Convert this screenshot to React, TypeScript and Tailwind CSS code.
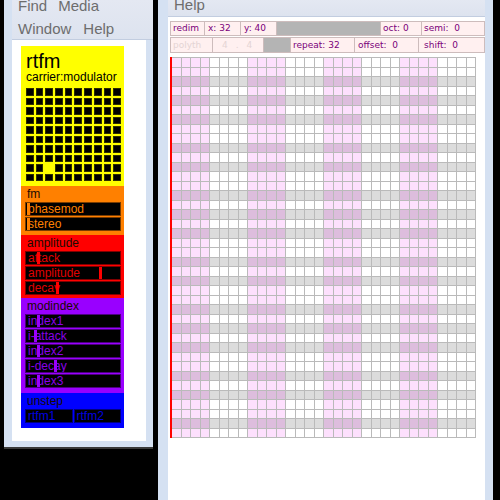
import React from "react";

type Slider = { label: string; pos: number };

type Section = {
  title: string;
  bg: string;
  box: string;
  bar: string;
  pb: string;
  split?: boolean;
  sliders: Slider[];
};

const sections: Section[] = [
  {
    title: "fm",
    bg: "bg-[#ff8000]",
    box: "border-[#7a3c00] text-[#ff8000]",
    bar: "bg-[#ff8000]",
    pb: "pb-[4px]",
    sliders: [
      { label: "phasemod", pos: 1 },
      { label: "stereo", pos: 1 },
    ],
  },
  {
    title: "amplitude",
    bg: "bg-[#ff0000]",
    box: "border-[#800000] text-[#e00000]",
    bar: "bg-[#ff0000]",
    pb: "pb-[3px]",
    sliders: [
      { label: "attack", pos: 11 },
      { label: "amplitude", pos: 73 },
      { label: "decay", pos: 30 },
    ],
  },
  {
    title: "modindex",
    bg: "bg-[#9900ff]",
    box: "border-[#4c0080] text-[#8800e8]",
    bar: "bg-[#9900ff]",
    pb: "pb-[5px]",
    sliders: [
      { label: "index1", pos: 11 },
      { label: "i-attack", pos: 8 },
      { label: "index2", pos: 11 },
      { label: "i-decay", pos: 28 },
      { label: "index3", pos: 11 },
    ],
  },
  {
    title: "unstep",
    bg: "bg-[#0000ff]",
    box: "border-[#000080] text-[#0000e0]",
    bar: "bg-[#0000ff]",
    pb: "pb-[5px]",
    split: true,
    sliders: [
      { label: "rtfm1", pos: -10 },
      { label: "rtfm2", pos: -10 },
    ],
  },
];

const BLACK_KEYS = [1, 3, 6, 8, 10];

function SliderBox({ s, box, bar, className }: { s: Slider; box: string; bar: string; className?: string }) {
  return (
    <div className={`relative h-[14px] overflow-hidden border bg-black ${box} ${className ?? ""}`}>
      <span className="block whitespace-nowrap pl-[2px] text-[12px] leading-[12px]">{s.label}</span>
      {s.pos >= 0 ? (
        <span className={`absolute top-0 h-full w-[3px] ${bar}`} style={{ left: s.pos }} />
      ) : null}
    </div>
  );
}

function Matrix() {
  const cells = [];
  for (let r = 0; r < 10; r++) {
    for (let c = 0; c < 10; c++) {
      const on = r === 8 && c === 2;
      cells.push(
        <div
          key={`${r}-${c}`}
          className={on ? "h-[7.5px] bg-[#ffff00]" : "h-[7.5px] border border-[#2e2e00] bg-black"}
        />
      );
    }
  }
  return <div className="mt-[5px] grid w-[95px] grid-cols-10 gap-[2px]">{cells}</div>;
}

function LeftPanel() {
  return (
    <div className="w-[103px] font-['Liberation_Sans',Arial,sans-serif]">
      <div className="bg-[#ffff00] pb-[5px] pl-[5px] pt-[5px]">
        <div className="text-[20px] leading-[20px] text-black">rtfm</div>
        <div className="text-[12px] leading-[12px] text-black">carrier:modulator</div>
        <Matrix />
      </div>
      {sections.map((sec) => (
        <div key={sec.title} className={`${sec.bg} ${sec.pb} pl-[4px] pr-[3px]`}>
          <div className="h-[16px] pl-[2px] text-[12px] leading-[16px] text-[#1a0a00]">{sec.title}</div>
          {sec.split ? (
            <div className="flex gap-[1px]">
              {sec.sliders.map((s) => (
                <SliderBox key={s.label} s={s} box={sec.box} bar={sec.bar} className="flex-1" />
              ))}
            </div>
          ) : (
            <div className="flex flex-col gap-[1px]">
              {sec.sliders.map((s) => (
                <SliderBox key={s.label} s={s} box={sec.box} bar={sec.bar} />
              ))}
            </div>
          )}
        </div>
      ))}
    </div>
  );
}

function Cell({ w, children, className }: { w: string; children?: React.ReactNode; className?: string }) {
  return (
    <div className={`${w} shrink-0 whitespace-nowrap border-l border-[#cdbcbc] ${className ?? ""}`}>{children}</div>
  );
}

function TopBar() {
  return (
    <div className="flex flex-col gap-[1px] font-['DejaVu_Sans',Verdana,sans-serif] text-[9px] text-[#7a007a]">
      <div className="flex h-[15px] border-y border-r border-[#cdbcbc] bg-[#fff0f0] leading-[13px]">
        <Cell w="w-[34px]" className="pl-[2px]">redim</Cell>
        <Cell w="w-[36px]" className="pl-[3px]">x: 32</Cell>
        <Cell w="w-[36px]" className="pl-[3px]">y: 40</Cell>
        <Cell w="w-[104px]" className="bg-[#b4b4b4]" />
        <Cell w="w-[41px]" className="pl-[2px]">oct: 0</Cell>
        <Cell w="w-[55px]" className="pl-[2px]">semi:&nbsp; 0</Cell>
      </div>
      <div className="flex h-[16px] border-y border-r border-[#cdbcbc] bg-[#fff0f0] leading-[14px]">
        <Cell w="w-[42px]" className="pl-[2px] text-[#e4d4d4]">polyth</Cell>
        <Cell w="w-[51px]" className="flex gap-[8px] pl-[9px] text-[#e4d4d4]">
          <span>4</span>
          <span>.</span>
          <span>4</span>
        </Cell>
        <Cell w="w-[27px]" className="bg-[#b4b4b4]" />
        <Cell w="w-[64px]" className="pl-[2px]">repeat: 32</Cell>
        <Cell w="w-[64px]" className="pl-[3px]">offset:&nbsp; 0</Cell>
        <Cell w="w-[58px]" className="pl-[5px]">shift:&nbsp; 0</Cell>
      </div>
    </div>
  );
}

function NoteGrid() {
  const cells = [];
  for (let r = 0; r < 40; r++) {
    const black = BLACK_KEYS.includes((12 - (r % 12)) % 12);
    for (let c = 0; c < 32; c++) {
      const pink = Math.floor(c / 4) % 2 === 0;
      let cls = "bg-white";
      if (pink && black) cls = "bg-[#ddbddd]";
      else if (pink) cls = "bg-[#fde0fd]";
      else if (black) cls = "bg-[#dcdcdc]";
      cells.push(<div key={`${r}-${c}`} className={cls} />);
    }
  }
  return (
    <div className="mt-[4px] grid h-[381px] w-[306px] grid-cols-[repeat(32,1fr)] grid-rows-[repeat(40,1fr)] gap-px border-l-2 border-[#ff0000] bg-[#bababa] py-px pr-px">
      {cells}
    </div>
  );
}

export default function App() {
  return (
    <div className="flex h-[500px] w-[500px] items-start overflow-hidden bg-black">
      {/* left window */}
      <div className="ml-[4px] flex h-[449px] w-[149px] flex-col border-b-2 border-[#3a3a3a] bg-[#d5e1f2]">
        <div className="ml-[8px] h-[40px] overflow-hidden border-b border-[#c2cde0] bg-gradient-to-b from-[#e4e8f2] to-[#dde3ef] pl-[6px] font-['Liberation_Sans',Arial,sans-serif] text-[15px] leading-[23px] text-[#6d6d6d]">
          <div className="-mt-[6px] flex">
            <span className="mr-[11px]">Find</span>
            <span>Media</span>
          </div>
          <div className="flex">
            <span className="mr-[12px]">Window</span>
            <span>Help</span>
          </div>
        </div>
        <div className="ml-[8px] mr-[7px] h-[401px] bg-white pl-[9px] pt-[6px]">
          <LeftPanel />
        </div>
      </div>

      {/* right window */}
      <div className="ml-[5px] flex h-[500px] w-[335px] flex-col bg-[#d5e1f2] pl-[10px] pr-[8px]">
        <div className="h-[17px] overflow-hidden border-b border-[#c2cde0] bg-gradient-to-b from-[#e4e8f2] to-[#dde3ef] pl-[6px] font-['Liberation_Sans',Arial,sans-serif] text-[15px] leading-[23px] text-[#6d6d6d]">
          <div className="-mt-[7px]">Help</div>
        </div>
        <div className="flex-1 bg-white pl-[2px] pt-[4px]">
          <TopBar />
          <NoteGrid />
        </div>
      </div>
    </div>
  );
}
